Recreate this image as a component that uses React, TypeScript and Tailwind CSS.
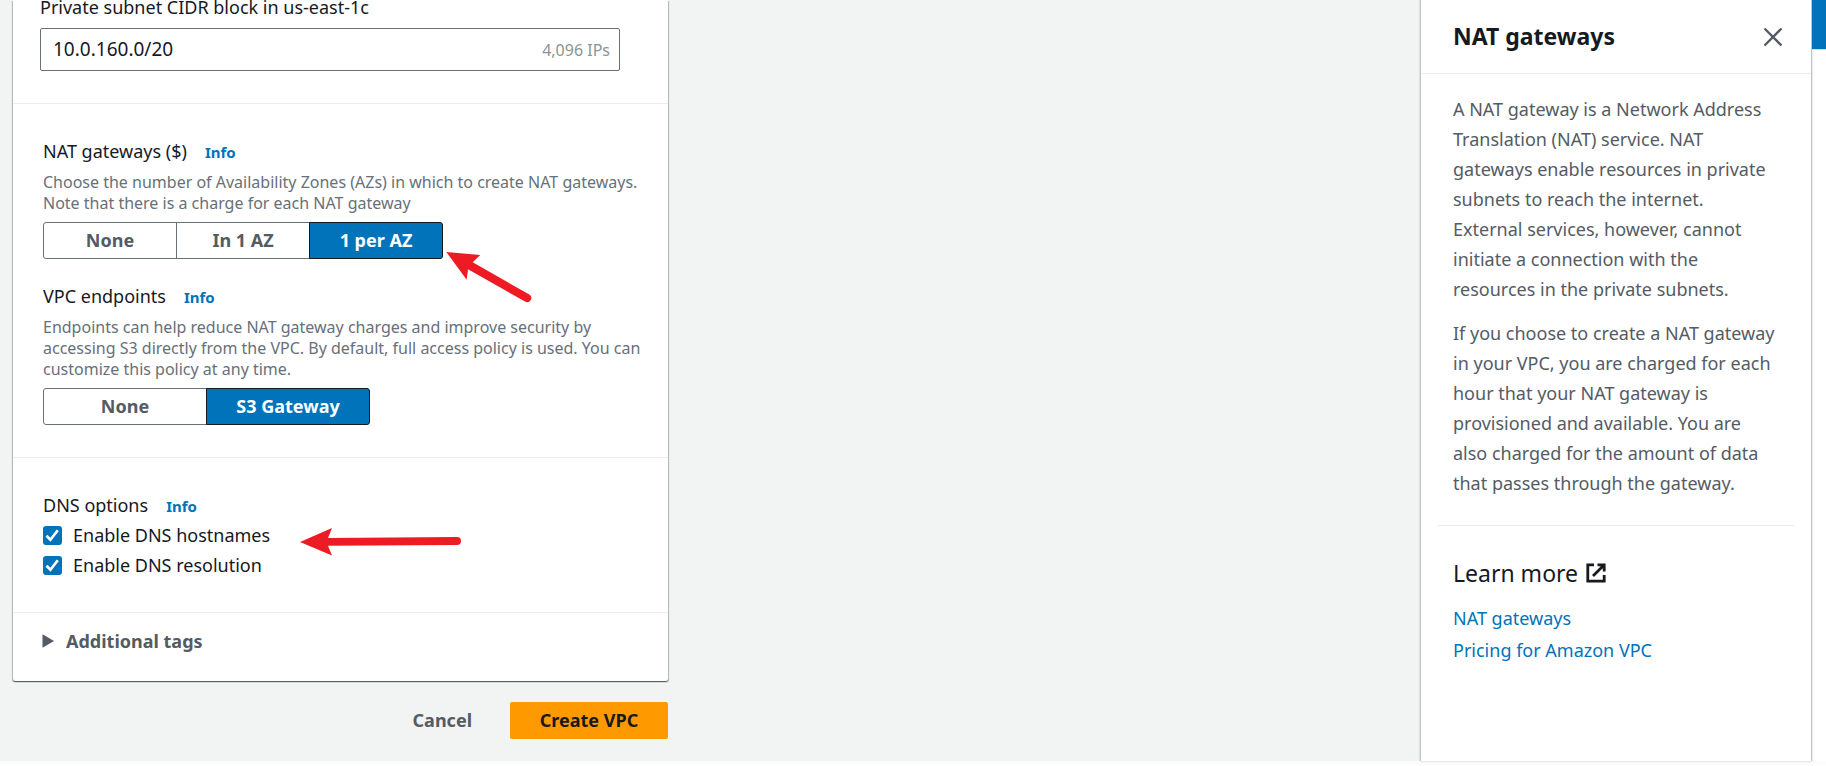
import type { ReactNode } from "react";

function Info() {
  return (
    <a href="#info" className="ml-[18px] text-[15px] leading-none font-bold text-[#0073bb]">
      Info
    </a>
  );
}

function Segments({ label, options, selected, itemClass }: { label: string; options: string[]; selected: string; itemClass: string }) {
  return (
    <div role="group" aria-label={label} className="mt-2 flex">
      {options.map((option) => (
        <button
          key={option}
          type="button"
          aria-pressed={option === selected}
          className={`-mr-px h-[37px] border pb-0.5 text-[18px] leading-[30px] font-bold first:rounded-l-[3px] last:mr-0 last:rounded-r-[3px] ${itemClass} ${
            option === selected ? "z-10 border-[#16191f] bg-[#0073bb] text-white" : "border-[#687078] bg-white text-[#545b64]"
          }`}
        >
          {option}
        </button>
      ))}
    </div>
  );
}

function Description({ children }: { children: ReactNode }) {
  return <p className="mt-1.5 pr-6 text-[16px] leading-[21px] text-[#687078]">{children}</p>;
}

function Check({ id, label }: { id: string; label: string }) {
  return (
    <div className="flex h-[30px] items-center">
      <span className="relative flex size-[19px]">
        <input id={id} type="checkbox" defaultChecked className="size-[19px] appearance-none rounded-[3px] bg-[#687078] checked:bg-[#0073bb]" />
        <svg viewBox="0 0 19 19" className="pointer-events-none absolute inset-0 size-[19px]" fill="none" stroke="#fff" strokeWidth="2.7" aria-hidden="true">
          <path d="M3.4 9.8 7.4 13.8 14.8 4.2" />
        </svg>
      </span>
      <label htmlFor={id} className="ml-[11px] text-[18px] leading-[30px]">
        {label}
      </label>
    </div>
  );
}

function VpcForm() {
  return (
    <form className="ml-[13px] w-[655px]" onSubmit={(e) => e.preventDefault()}>
      <div className="rounded-b-[2px] bg-white shadow-[0_1px_1px_0_rgba(0,28,36,0.5),1px_1px_1px_0_rgba(0,28,36,0.25),-1px_1px_1px_0_rgba(0,28,36,0.25)]">
        <section className="border-b border-[#eaeded] pr-12 pb-8 pl-[27px]">
          <label htmlFor="cidr" className="block text-[18px] leading-[14px]">
            Private subnet CIDR block in us-east-1c
          </label>
          <div className="mt-3.5 flex h-[43px] items-center rounded-[2px] border border-[#687078] pr-[9px] pl-3">
            <input id="cidr" type="text" defaultValue="10.0.160.0/20" className="min-w-0 flex-1 text-[19px] outline-none" />
            <span className="text-[16px] text-[#879596]">4,096 IPs</span>
          </div>
        </section>

        <section className="border-b border-[#eaeded] pt-8 pb-8 pl-[30px]">
          <h3 className="text-[18px] leading-[30px]">
            NAT gateways ($)
            <Info />
          </h3>
          <Description>
            Choose the number of Availability Zones (AZs) in which to create NAT gateways. Note that there is a charge for each NAT gateway
          </Description>
          <div className="relative w-fit">
            <Segments label="NAT gateways" options={["None", "In 1 AZ", "1 per AZ"]} selected="1 per AZ" itemClass="w-[134px]" />
            <svg viewBox="446 251 86 52" className="absolute top-[29px] left-[403px] h-[52px] w-[86px]" fill="#ed1c24" aria-hidden="true">
              <path d="M446.3 252 480.3 255 472.7 262.3 529.3 294.6A4 4 0 0 1 525 301.5L468 269.3 466.7 279.7Z" />
            </svg>
          </div>

          <h3 className="mt-[22px] text-[18px] leading-[30px]">
            VPC endpoints
            <Info />
          </h3>
          <Description>
            Endpoints can help reduce NAT gateway charges and improve security by accessing S3 directly from the VPC. By default, full access policy is used. You can customize this policy at any time.
          </Description>
          <Segments label="VPC endpoints" options={["None", "S3 Gateway"]} selected="S3 Gateway" itemClass="w-[164px]" />
        </section>

        <section className="relative border-b border-[#eaeded] pt-8 pb-8 pl-[30px]">
          <h3 className="text-[18px] leading-[30px]">
            DNS options
            <Info />
          </h3>
          <Check id="hostnames" label="Enable DNS hostnames" />
          <Check id="resolution" label="Enable DNS resolution" />
          <svg viewBox="300 527 162 30" className="absolute top-[69px] left-[287px] h-[30px] w-[162px]" fill="#ed1c24" aria-hidden="true">
            <path d="M300 542 332 528 328 537.9 457 537A4 4 0 0 1 457 545L328 545.8 332 555.5Z" />
          </svg>
        </section>

        <section className="pt-[13px] pb-[25px] pl-[29px]">
          <button type="button" aria-expanded="false" className="flex items-center text-[18px] leading-[30px] font-bold text-[#545b64]">
            <svg viewBox="0 0 12 14" className="mr-3 h-[14px] w-3" fill="currentColor" aria-hidden="true">
              <path d="M0.5 0.3 12 7 0.5 13.7Z" />
            </svg>
            Additional tags
          </button>
        </section>
      </div>

      <div className="mt-[21px] flex justify-end pb-[22px] text-[18px] leading-[30px] font-bold">
        <button type="button" className="h-[37px] px-[38px] pb-0.5 text-[#545b64]">
          Cancel
        </button>
        <button type="submit" className="h-[37px] w-[158px] rounded-[2px] bg-[#ff9900] pb-0.5">
          Create VPC
        </button>
      </div>
    </form>
  );
}

function HelpPanel() {
  return (
    <aside className="w-[392px] shrink-0 border-x border-[#bcc5c9] bg-white shadow-[0_0_2px_rgba(0,28,36,0.25)]">
      <header className="flex h-[74px] items-center justify-between border-b border-[#eaeded] pr-[28px] pl-8">
        <h2 className="text-[23px] font-bold">NAT gateways</h2>
        <button type="button" aria-label="Close">
          <svg viewBox="0 0 20 20" className="size-5" fill="none" stroke="#545b64" strokeWidth="2.3" aria-hidden="true">
            <path d="M1.5 1.5 18.5 18.5M18.5 1.5 1.5 18.5" />
          </svg>
        </button>
      </header>
      <div className="pt-5 pr-[34px] pl-8 text-[18px] leading-[30px] text-[#545b64]">
        <p>
          A NAT gateway is a Network Address Translation (NAT) service. NAT gateways enable resources in private subnets to reach the internet. External services, however, cannot initiate a connection with the resources in the private subnets.
        </p>
        <p className="mt-3.5">
          If you choose to create a NAT gateway in your VPC, you are charged for each hour that your NAT gateway is provisioned and available. You are also charged for the amount of data that passes through the gateway.
        </p>
      </div>
      <hr className="mx-4 mt-[27px] border-[#eaeded]" />
      <div className="pt-8 pl-8">
        <h3 className="flex items-center gap-2 text-[23px] leading-[30px]">
          Learn more
          <svg viewBox="0 0 20 20" className="size-5" fill="none" stroke="#16191f" strokeWidth="2.8" aria-hidden="true">
            <path d="M8 1.8H1.8V18.2H18.2V12M11.5 1.8H18.2V8.5M18 2 7 13" />
          </svg>
        </h3>
        <ul className="mt-3.5 text-[18px] leading-8 text-[#0073bb]">
          <li>
            <a href="#nat">NAT gateways</a>
          </li>
          <li>
            <a href="#pricing">Pricing for Amazon VPC</a>
          </li>
        </ul>
      </div>
    </aside>
  );
}

export default function App() {
  return (
    <div className="min-h-screen bg-[#fcfcfc] font-['Noto_Sans',sans-serif] text-[#16191f]">
      <div className="flex bg-white">
        <main className="min-w-0 flex-1 bg-[#f2f3f3]">
          <VpcForm />
        </main>
        <HelpPanel />
        <div className="w-[14px] shrink-0">
          <div className="h-[50px] border-b border-[#d5dbdb] bg-[#0073bb]" />
        </div>
      </div>
    </div>
  );
}
